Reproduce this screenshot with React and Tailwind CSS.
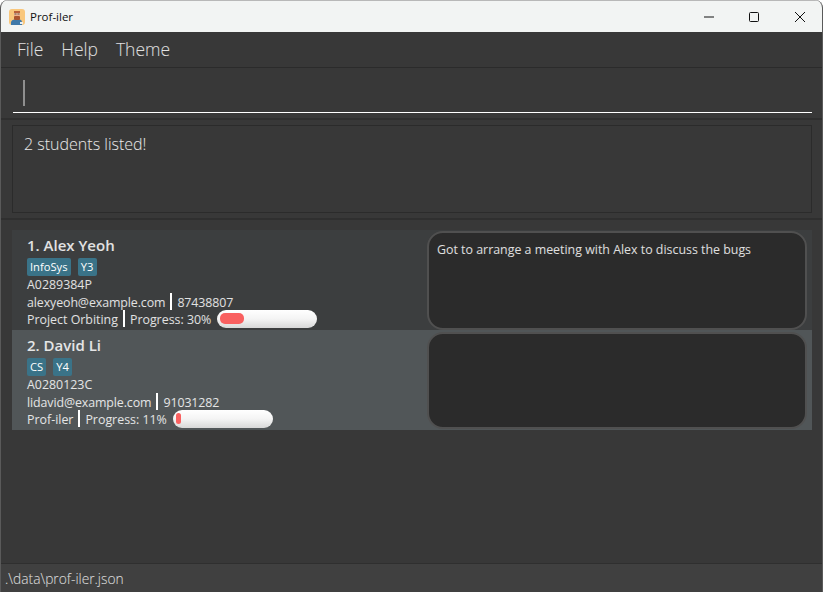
import React from "react";

function Bar({ fill }) {
  return (
    <div className="h-[18px] w-[100px] rounded-[9px] bg-gradient-to-b from-[#ffffff] via-[#f4f4f4] to-[#d8d8d8] pl-[3px] pt-[3px] shrink-0">
      <div className={`h-[11px] rounded-[5px] bg-[#f96060] ${fill}`} />
    </div>
  );
}

function Tag({ children }) {
  return <span className="h-[18px] min-w-[19px] px-[3px] text-center leading-[18px] rounded-[2px] bg-[#3a7388] text-[11.2px] text-[#ffffff]">{children}</span>;
}

function Divider() {
  return <div className="w-[2px] h-[17px] bg-[#ffffff] mx-[5px] shrink-0" />;
}

function Card({ index, name, tags, id, email, phone, project, progress, fill, note, rowBg, noteY }) {
  return (
    <div className={`flex h-[100px] ${rowBg}`}>
      <div className="w-[415px] pl-[15px] pt-[5px] shrink-0 text-[12.4px] text-[#ffffff]/85">
        <div className="h-[21px] leading-[21px] text-[15px] font-semibold text-[#ffffff]/85">{index}. {name}</div>
        <div className="flex gap-[7px] mt-[2px] h-[18px]">
          {tags.map((t) => <Tag key={t}>{t}</Tag>)}
        </div>
        <div className="h-[17px] leading-[17px]">{id}</div>
        <div className="flex h-[17px] leading-[19px]">
          <span className="tracking-[-0.1px]">{email}</span>
          <Divider />
          <span className="tracking-[-0.1px]">{phone}</span>
        </div>
        <div className="flex h-[17px] leading-[19px]">
          <span>{project}</span>
          <Divider />
          <span className="mr-[6px]">Progress: {progress}%</span>
          <Bar fill={fill} />
        </div>
      </div>
      <div className={`flex-1 mr-[5px] ${noteY} rounded-[16px] bg-[#2b2b2b] border-2 border-[#505050] px-[8px] py-[8px] text-[12.4px] leading-[18px] text-[#ffffff]/85`}>
        {note}
      </div>
    </div>
  );
}

function ProfilerIcon() {
  return (
    <svg width="16" height="16" viewBox="0 0 16 16" className="shrink-0">
      <rect width="16" height="16" rx="3" fill="#f9c77c" />
      <path d="M2 16v-2.5C2 11.5 4 10.5 5.5 10.5h5c1.5 0 2.5 1 2.5 3V16z" fill="#3f78a8" />
      <rect x="5" y="2" width="6" height="2" fill="#b8603a" />
      <rect x="5" y="4" width="6" height="3" fill="#eeb08e" />
      <rect x="5" y="7" width="6" height="4" rx="1" fill="#a9532f" />
      <rect x="5.5" y="4.5" width="2" height="1" fill="#5c5c5c" />
      <rect x="8.5" y="4.5" width="2" height="1" fill="#5c5c5c" />
      <rect x="11" y="13" width="3" height="2" fill="#e8eef2" />
    </svg>
  );
}

export default function App() {
  return (
    <div className="w-[823px] h-[592px] flex flex-col overflow-hidden rounded-t-[8px] bg-[#383838] font-['Open_Sans','Noto_Sans',sans-serif] border-x border-[#5a5a5a]">
      <div className="h-[32px] shrink-0 flex items-center bg-[#f2f4f3] text-[#111111] pl-[8px] border-t border-[#b8b8b8]">
        <ProfilerIcon />
        <span className="ml-[5px] text-[11.5px]">Prof-iler</span>
        <div className="ml-auto flex items-center">
          <svg width="12" height="12" viewBox="0 0 12 12" className="mr-[33px]"><path d="M1 6h10" stroke="#111" strokeWidth="1" /></svg>
          <svg width="12" height="12" viewBox="0 0 12 12" className="mr-[34px]"><rect x="1.5" y="1.5" width="9" height="9" rx="1" fill="none" stroke="#111" strokeWidth="1" /></svg>
          <svg width="12" height="12" viewBox="0 0 12 12" className="mr-[16px]"><path d="M1 1l10 10M11 1L1 11" stroke="#111" strokeWidth="1" /></svg>
        </div>
      </div>

      <div className="h-[36px] shrink-0 flex items-center gap-[18px] pl-[16px] text-[17.5px] font-light text-[#ffffff]/85 border-b border-[#2b2b2b]">
        <span>File</span>
        <span>Help</span>
        <span>Theme</span>
      </div>

      <div className="h-[52px] shrink-0 pl-[12px] pr-[10px] pt-[6px] border-b-2 border-[#2f2f2f]">
        <div className="h-[39px] border-b border-[#ffffff] pl-[10px] pt-[6px]">
          <div className="w-[2px] h-[26px] bg-[#8f8f8f]" />
        </div>
      </div>

      <div className="h-[100px] shrink-0 pl-[11px] pr-[10px] pt-[5px] border-b-2 border-[#2f2f2f]">
        <div className="h-[88px] border border-[#2b2b2b] px-[11px] py-[6px] text-[16px] font-light text-[#ffffff]/90">
          2 students listed!
        </div>
      </div>

      <div className="flex-1 pl-[11px] pr-[10px] pt-[10px]">
        <Card index={1} name="Alex Yeoh" tags={["InfoSys", "Y3"]} id="A0289384P" email="alexyeoh@example.com" phone="87438807" project="Project Orbiting" progress={30} fill="w-[24px]" note="Got to arrange a meeting with Alex to discuss the bugs" rowBg="bg-[#3c3e3f]" noteY="mt-[1px]" />
        <Card index={2} name="David Li" tags={["CS", "Y4"]} id="A0280123C" email="lidavid@example.com" phone="91031282" project="Prof-iler" progress={11} fill="w-[5px]" note="" rowBg="bg-[#515658]" noteY="mt-[2px] mb-[1px]" />
      </div>

      <div className="h-[29px] shrink-0 pl-[4px] leading-[30px] text-[13.8px] font-light text-[#ffffff]/85 bg-[#404040] border-t border-[#2f2f2f]">
        .\data\prof-iler.json
      </div>
    </div>
  );
}
